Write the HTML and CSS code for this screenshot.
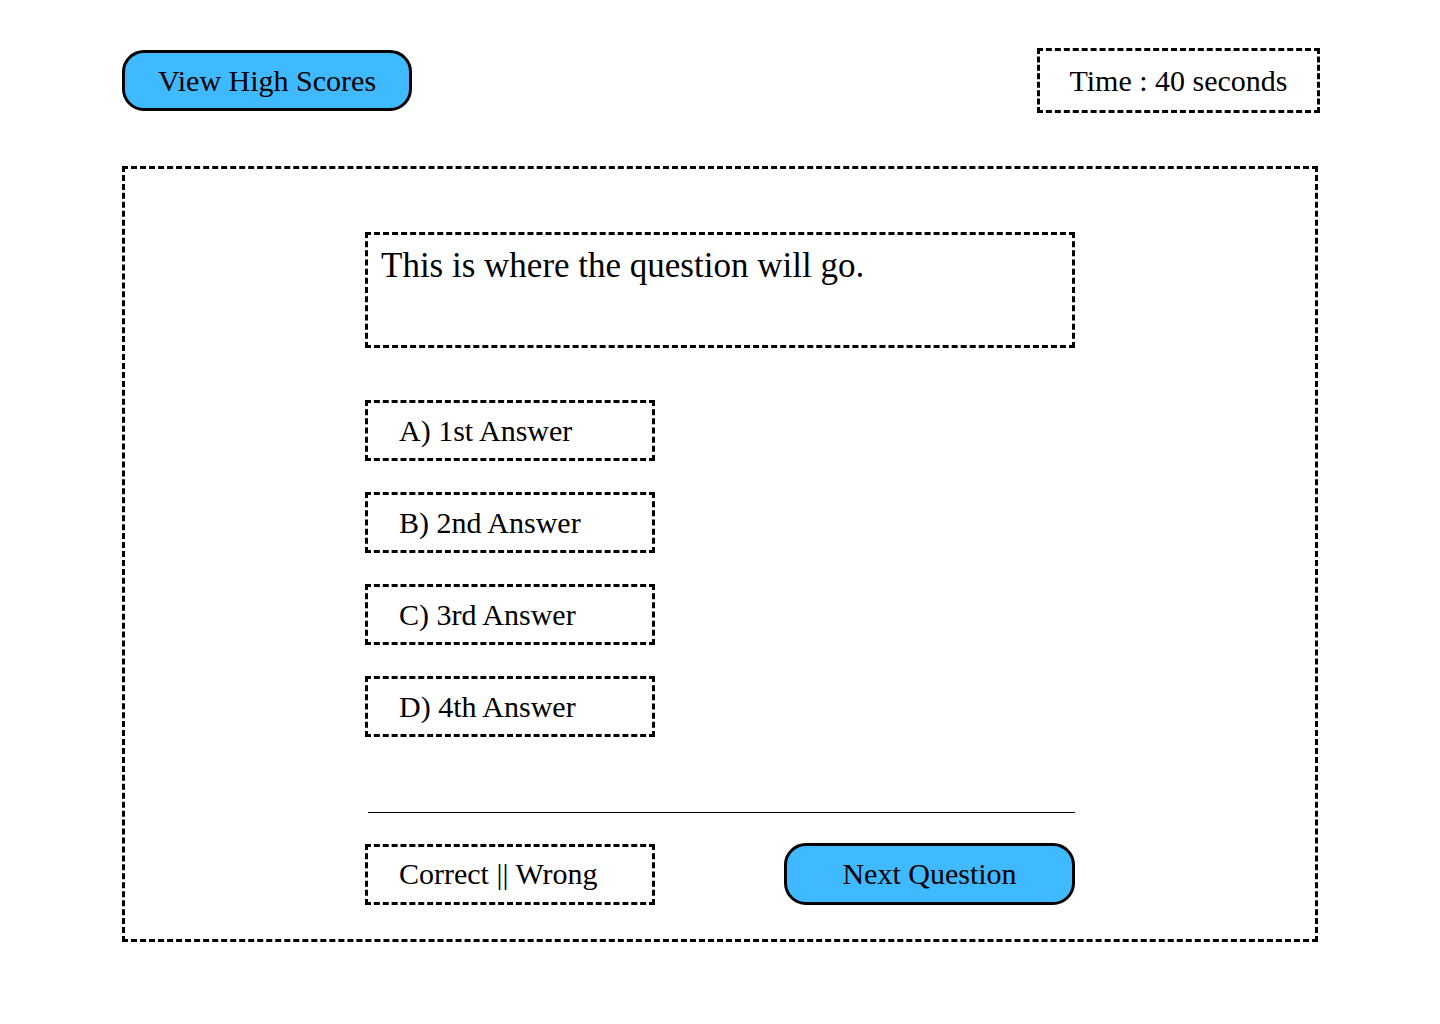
FILE: index.html
```html
<!DOCTYPE html>
<html>

<head>
    <meta charset="utf-8">
    <meta name="viewport" content="width=device-width, initial-scale=1">
    <title>Code Quiz</title>
    <link rel="stylesheet" href="styles.css">
</head>

<body>
    <header class="top-bar">
        <button class="pill-button" id="high-scores">View High Scores</button>
        <div class="timer" id="timer">Time : 40 seconds</div>
    </header>

    <main class="quiz-box">
        <div class="quiz-column">
            <div class="question" id="question">This is where the question will go.</div>

            <ul class="answers" id="answers">
                <li class="answer">A) 1st Answer</li>
                <li class="answer">B) 2nd Answer</li>
                <li class="answer">C) 3rd Answer</li>
                <li class="answer">D) 4th Answer</li>
            </ul>

            <hr class="divider">

            <div class="quiz-footer">
                <div class="answer result" id="result">Correct || Wrong</div>
                <button class="pill-button next-button" id="next-button">Next Question</button>
            </div>
        </div>
    </main>
</body>

</html>
```

FILE: styles.css
```css
body {
    margin: 0;
    background-color: #fff;
    color: #000;
    font-family: "Liberation Serif", "Times New Roman", serif;
    font-size: 30px;
}

.top-bar {
    display: flex;
    justify-content: space-between;
    align-items: center;
    padding: 48px 120px 0 122px;
}

.pill-button {
    box-sizing: border-box;
    width: 290px;
    height: 61px;
    padding: 0;
    border: 3px solid #000;
    border-radius: 22px;
    background-color: #3fb9ff;
    color: #000;
    font-family: inherit;
    font-size: 30px;
    cursor: pointer;
}

.timer {
    box-sizing: border-box;
    display: flex;
    justify-content: center;
    align-items: center;
    width: 283px;
    height: 65px;
    border: 3px dashed #000;
}

.quiz-box {
    box-sizing: border-box;
    width: 1196px;
    margin: 53px auto 0;
    padding: 63px 0 34px;
    border: 3px dashed #000;
}

.quiz-column {
    width: 710px;
    margin: 0 auto;
}

.question {
    box-sizing: border-box;
    height: 116px;
    padding: 11px 13px;
    border: 3px dashed #000;
    font-size: 35px;
}

.answers {
    display: flex;
    flex-direction: column;
    gap: 31px;
    margin: 52px 0 0;
    padding: 0;
    list-style: none;
}

.answer {
    box-sizing: border-box;
    display: flex;
    align-items: center;
    width: 290px;
    height: 61px;
    padding: 0 31px;
    border: 3px dashed #000;
    cursor: pointer;
}

.divider {
    height: 0;
    margin: 75px 0 0 3px;
    border: none;
    border-top: 1px solid #000;
}

.quiz-footer {
    display: flex;
    justify-content: space-between;
    align-items: center;
    margin-top: 30px;
}

.result {
    cursor: default;
}

.next-button {
    width: 291px;
    height: 62px;
}
```
